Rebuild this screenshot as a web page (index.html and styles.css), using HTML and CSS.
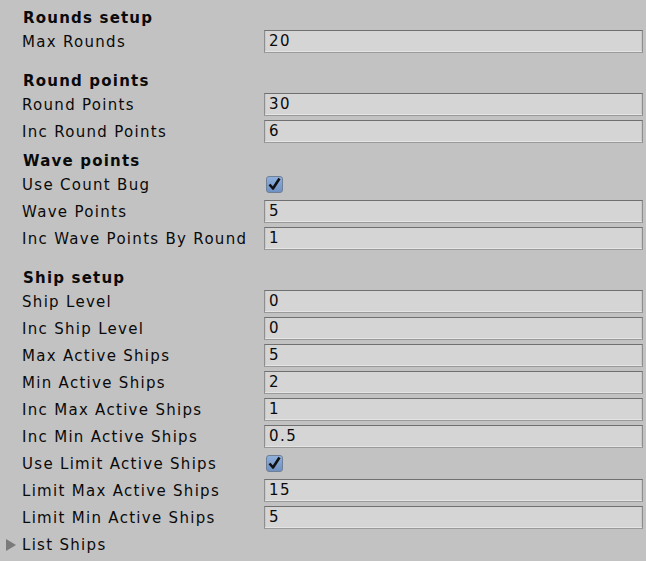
FILE: index.html
```html
<!DOCTYPE html>
<html>
<head>
<meta charset="utf-8">
<link rel="stylesheet" href="styles.css">
</head>
<body>
<div class="inspector">
  <div class="header">Rounds setup</div>
  <div class="row"><span class="label">Max Rounds</span><div class="field">20</div></div>

  <div class="header spaced">Round points</div>
  <div class="row"><span class="label">Round Points</span><div class="field">30</div></div>
  <div class="row"><span class="label">Inc Round Points</span><div class="field">6</div></div>

  <div class="header">Wave points</div>
  <div class="row"><span class="label">Use Count Bug</span><div class="check"><svg viewBox="0 0 17 17" width="17" height="17"><path d="M3.5 8.5 L7 12.5 L13.5 2.5" fill="none" stroke="#111" stroke-width="2.6" stroke-linejoin="round"/></svg></div></div>
  <div class="row"><span class="label">Wave Points</span><div class="field">5</div></div>
  <div class="row"><span class="label">Inc Wave Points By Round</span><div class="field">1</div></div>

  <div class="header spaced">Ship setup</div>
  <div class="row"><span class="label">Ship Level</span><div class="field">0</div></div>
  <div class="row"><span class="label">Inc Ship Level</span><div class="field">0</div></div>
  <div class="row"><span class="label">Max Active Ships</span><div class="field">5</div></div>
  <div class="row"><span class="label">Min Active Ships</span><div class="field">2</div></div>
  <div class="row"><span class="label">Inc Max Active Ships</span><div class="field">1</div></div>
  <div class="row"><span class="label">Inc Min Active Ships</span><div class="field">0.5</div></div>
  <div class="row"><span class="label">Use Limit Active Ships</span><div class="check"><svg viewBox="0 0 17 17" width="17" height="17"><path d="M3.5 8.5 L7 12.5 L13.5 2.5" fill="none" stroke="#111" stroke-width="2.6" stroke-linejoin="round"/></svg></div></div>
  <div class="row"><span class="label">Limit Max Active Ships</span><div class="field">15</div></div>
  <div class="row"><span class="label">Limit Min Active Ships</span><div class="field">5</div></div>
  <div class="row foldout"><span class="arrow"></span><span class="label">List Ships</span></div>
</div>
</body>
</html>
```
FILE: styles.css
```css
html, body {
  margin: 0;
  padding: 0;
  background: #c2c2c2;
}
.inspector {
  width: 646px;
  height: 561px;
  box-sizing: border-box;
  padding: 0 3px 0 22px;
  font-family: "DejaVu Sans", Verdana, sans-serif;
  font-size: 15px;
  letter-spacing: 1.3px;
  color: #0a0a0a;
  overflow: hidden;
}
.header {
  height: 18px;
  line-height: 18px;
  margin-top: 9px;
  margin-bottom: 3px;
  font-weight: bold;
  padding-left: 1px;
  letter-spacing: 1.2px;
}
.header.spaced {
  margin-top: 19px;
}
.row {
  display: flex;
  align-items: center;
  height: 23px;
  margin-bottom: 4px;
}
.label {
  width: 242px;
  flex: none;
  white-space: nowrap;
}
.field {
  flex: 1;
  height: 23px;
  box-sizing: border-box;
  border: 1px solid #8e8e8e;
  border-top-color: #707070;
  border-bottom-color: #9a9a9a;
  background: #d5d5d5;
  box-shadow: inset 0 -1px 0 #e4e4e4, inset 1px 0 0 #c8c8c8, inset -1px 0 0 #c8c8c8;
  padding: 0 0 0 4px;
  line-height: 21px;
  letter-spacing: 1.5px;
}
.check {
  width: 17px;
  height: 17px;
  margin-left: 2px;
  box-sizing: border-box;
  border: 1px solid #6e7f96;
  border-radius: 3px;
  background: linear-gradient(#8fb0dc, #6f91c2);
  position: relative;
}
.check svg {
  position: absolute;
  left: -1px;
  top: -1px;
}
.foldout {
  position: relative;
}
.arrow {
  position: absolute;
  left: -16px;
  top: 6px;
  width: 0;
  height: 0;
  border-top: 6px solid transparent;
  border-bottom: 6px solid transparent;
  border-left: 10px solid #7a7a7a;
}
```
